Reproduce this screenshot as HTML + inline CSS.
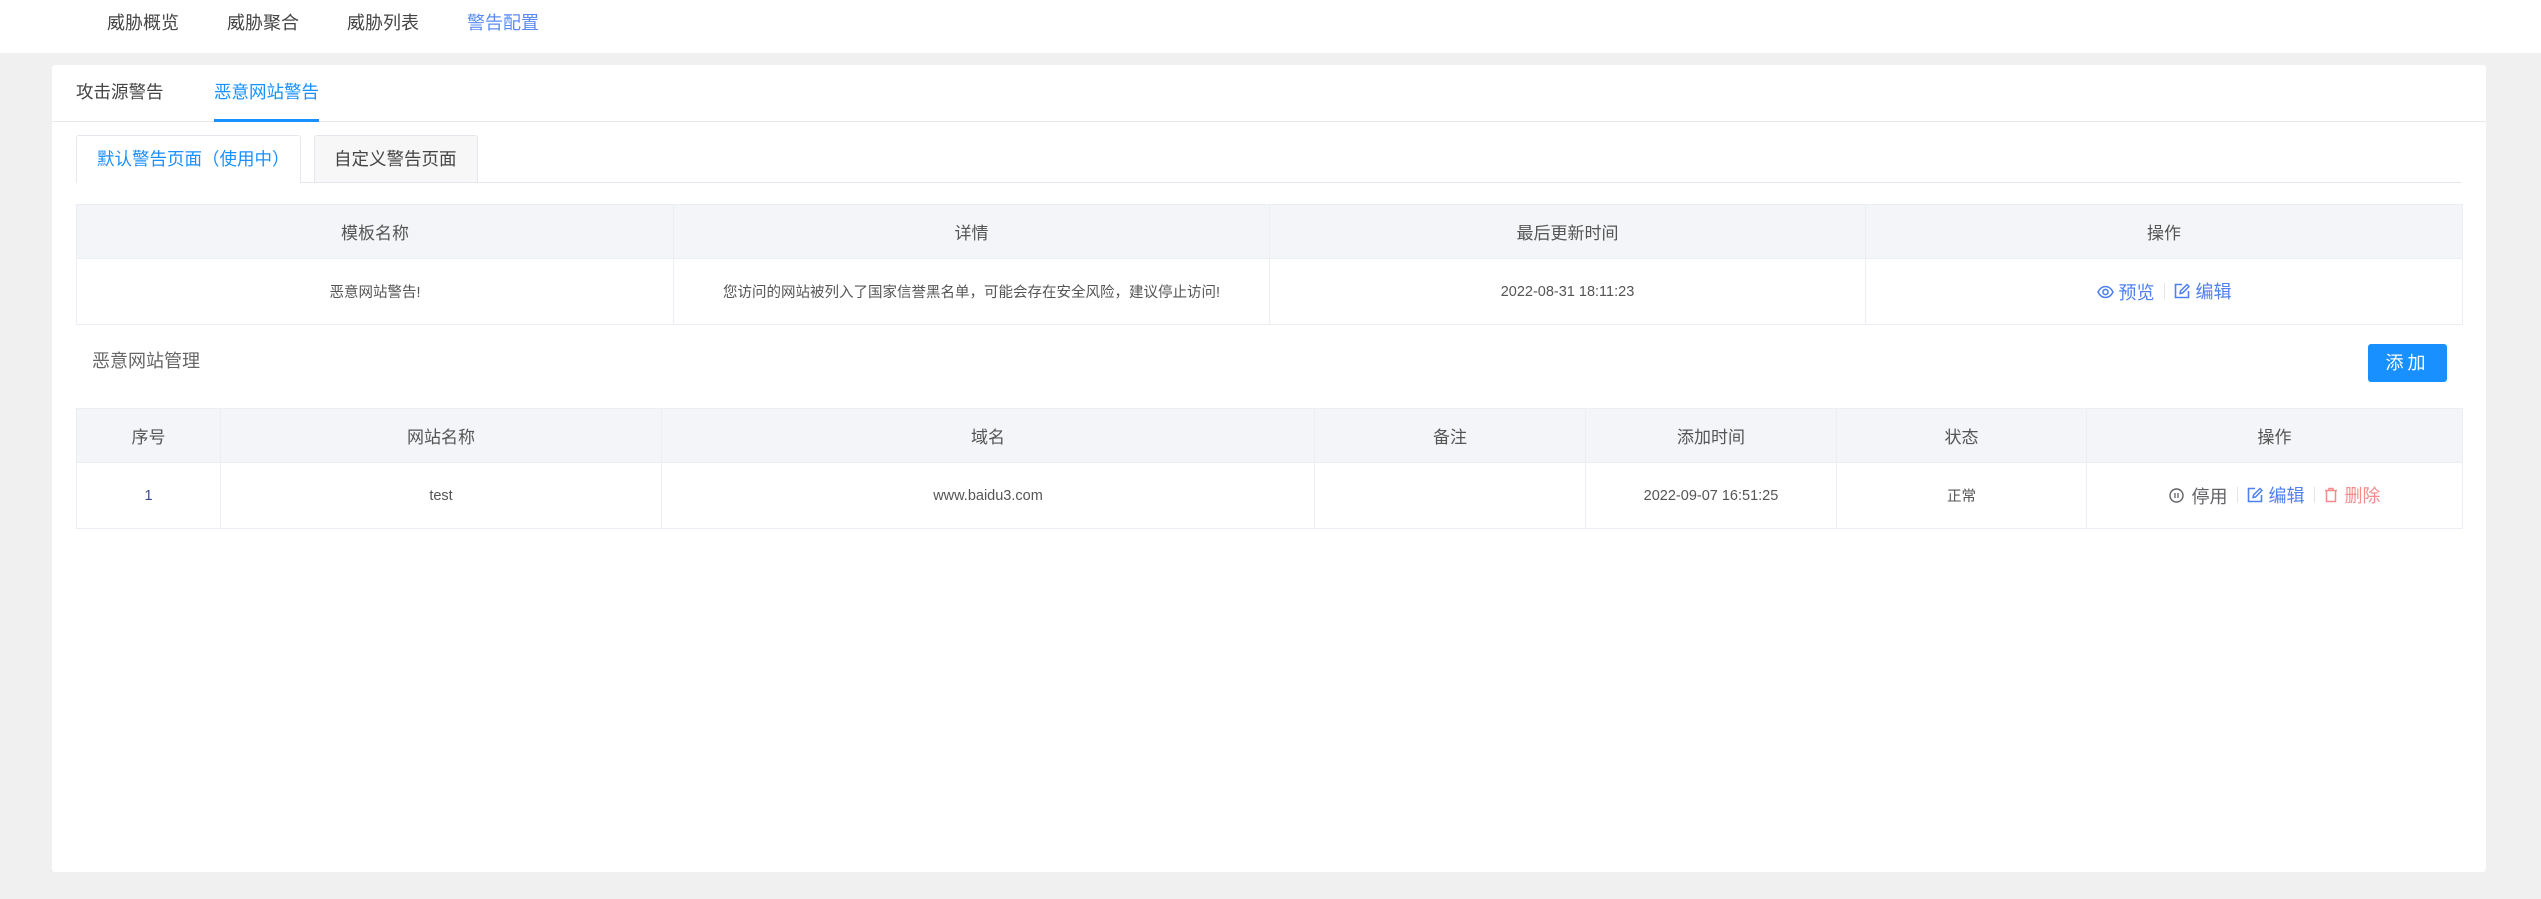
<!DOCTYPE html>
<html><head><meta charset="utf-8">
<style>
*{margin:0;padding:0;box-sizing:border-box}
body{width:2541px;height:899px;background:#f0f0f0;font-family:"Liberation Sans","Noto Sans CJK SC",sans-serif;color:#333;position:relative;overflow:hidden}
.a{position:absolute;white-space:nowrap}
.hdr{left:0;top:0;width:2541px;height:53px;background:#fff}
.nav{top:10px;font-size:18px;color:#444;line-height:26px}
.card{left:52px;top:65px;width:2434px;height:807px;background:#fff;border-radius:3px}
table{position:absolute;border-collapse:collapse;table-layout:fixed}
td,th{border:1px solid #ebeef5;text-align:center;font-weight:normal}
th{background:#f3f5f8;font-size:17px;color:#555;height:54px}
td{font-size:14.5px;color:#555;height:66px}
.lk{display:inline-flex;align-items:center;font-size:18px}
.sep{display:inline-block;width:1px;height:16px;background:#e4e4e4;margin:0 9px}
svg{display:block}
</style></head><body>
<div class="a hdr"></div>
<div class="a nav" style="left:107px">威胁概览</div>
<div class="a nav" style="left:227px">威胁聚合</div>
<div class="a nav" style="left:347px">威胁列表</div>
<div class="a nav" style="left:467px;color:#5b8cf5">警告配置</div>

<div class="a card"></div>
<div class="a" style="left:52px;top:121px;width:2434px;height:1px;background:#e8e8e8"></div>
<div class="a" style="left:76px;top:80px;font-size:17.5px;line-height:24px;color:#444">攻击源警告</div>
<div class="a" style="left:214px;top:80px;font-size:17.5px;line-height:24px;color:#1890ff">恶意网站警告</div>
<div class="a" style="left:214px;top:119px;width:105px;height:3px;background:#1890ff"></div>

<div class="a" style="left:76px;top:182px;width:2386px;height:1px;background:#e4e7ed"></div>
<div class="a" style="left:76px;top:135px;width:225px;height:48px;background:#fff;border:1px solid #e4e7ed;border-bottom:none;border-radius:3px 3px 0 0"></div>
<div class="a" style="left:97px;top:147px;font-size:17.5px;line-height:24px;color:#1890ff">默认警告页面（使用中）</div>
<div class="a" style="left:314px;top:135px;width:164px;height:47px;background:#f7f7f7;border:1px solid #e4e7ed;border-bottom:none;border-radius:3px 3px 0 0"></div>
<div class="a" style="left:334px;top:147px;font-size:17.5px;line-height:24px;color:#444">自定义警告页面</div>

<table style="left:76px;top:204px;width:2386px">
<colgroup><col style="width:597px"><col style="width:596px"><col style="width:596px"><col style="width:597px"></colgroup>
<tr><th>模板名称</th><th>详情</th><th>最后更新时间</th><th>操作</th></tr>
<tr><td>恶意网站警告!</td><td>您访问的网站被列入了国家信誉黑名单，可能会存在安全风险，建议停止访问!</td><td>2022-08-31 18:11:23</td>
<td><span class="lk" style="color:#4f80f2">
<svg width="17" height="14" viewBox="0 0 17 14"><path d="M1 7C3 3 5.5 1.5 8.5 1.5S14 3 16 7C14 11 11.5 12.5 8.5 12.5S3 11 1 7Z" fill="none" stroke="#4f80f2" stroke-width="1.6"/><circle cx="8.5" cy="7" r="2.6" fill="none" stroke="#4f80f2" stroke-width="1.6"/></svg>
<span style="margin-left:5px">预览</span></span><span class="sep"></span><span class="lk" style="color:#4f80f2">
<svg width="16" height="16" viewBox="0 0 16 16"><path d="M8 1.5H1.5V14.5H14.5V8" fill="none" stroke="#4f80f2" stroke-width="1.6"/><path d="M13 1.5L15 3.5L8.5 10L6 10.5L6.5 8Z" fill="none" stroke="#4f80f2" stroke-width="1.5"/></svg>
<span style="margin-left:6px">编辑</span></span></td></tr>
</table>

<div class="a" style="left:92px;top:349px;font-size:18px;line-height:24px;color:#666">恶意网站管理</div>
<div class="a" style="left:2368px;top:344px;width:79px;height:38px;background:#1890ff;border-radius:3px;color:#fff;font-size:18px;line-height:38px;text-align:center;letter-spacing:4px">添加</div>

<table style="left:76px;top:408px;width:2386px">
<colgroup><col style="width:144px"><col style="width:441px"><col style="width:653px"><col style="width:271px"><col style="width:251px"><col style="width:250px"><col style="width:376px"></colgroup>
<tr><th>序号</th><th>网站名称</th><th>域名</th><th>备注</th><th>添加时间</th><th>状态</th><th>操作</th></tr>
<tr><td style="color:#3a4a8a">1</td><td>test</td><td>www.baidu3.com</td><td></td><td>2022-09-07 16:51:25</td><td>正常</td>
<td><span class="lk" style="color:#606266">
<svg width="15" height="15" viewBox="0 0 15 15"><circle cx="7.5" cy="7.5" r="6.5" fill="none" stroke="#606266" stroke-width="1.4"/><path d="M6 5V10M9 5V10" stroke="#606266" stroke-width="1.3"/></svg>
<span style="margin-left:8px">停用</span></span><span class="sep"></span><span class="lk" style="color:#4f80f2">
<svg width="16" height="16" viewBox="0 0 16 16"><path d="M8 1.5H1.5V14.5H14.5V8" fill="none" stroke="#4f80f2" stroke-width="1.6"/><path d="M13 1.5L15 3.5L8.5 10L6 10.5L6.5 8Z" fill="none" stroke="#4f80f2" stroke-width="1.5"/></svg>
<span style="margin-left:6px">编辑</span></span><span class="sep"></span><span class="lk" style="color:#f48b8b">
<svg width="14" height="16" viewBox="0 0 14 16"><path d="M1 3.5H13M5 3.5V1.5H9V3.5M2.5 3.5V14.5H11.5V3.5" fill="none" stroke="#f48b8b" stroke-width="1.5"/></svg>
<span style="margin-left:7px">删除</span></span></td></tr>
</table>
</body></html>
